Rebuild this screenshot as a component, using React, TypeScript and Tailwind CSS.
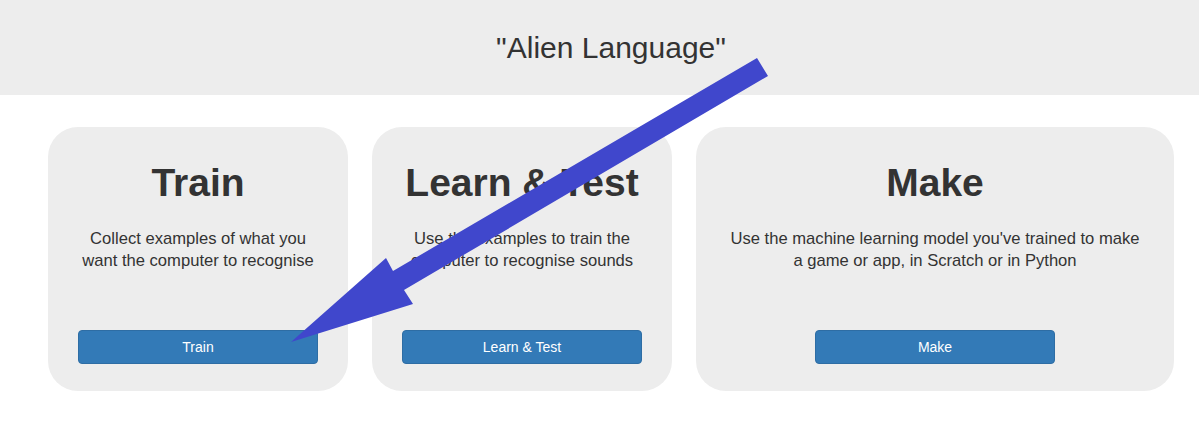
const CARDS = [
  {
    title: "Train",
    text: "Collect examples of what you want the computer to recognise",
    button: "Train",
    width: "w-[300px]",
  },
  {
    title: "Learn & Test",
    text: "Use the examples to train the computer to recognise sounds",
    button: "Learn & Test",
    width: "w-[300px]",
  },
  {
    title: "Make",
    text: "Use the machine learning model you've trained to make a game or app, in Scratch or in Python",
    button: "Make",
    width: "w-[478px]",
  },
];

function Card({ title, text, button, width }: (typeof CARDS)[number]) {
  return (
    <div
      className={`${width} flex h-[264px] flex-col items-center rounded-[30px] bg-[#ededed] px-[30px] pt-[35px] pb-[27px] text-center text-[#333]`}
    >
      <h2 className="text-[39px] font-bold leading-[42px]">{title}</h2>
      <p className="mt-[24px] text-[16.6px] leading-[22px]">{text}</p>
      <button className="mt-auto h-[34px] w-[240px] rounded-[4px] border border-[#2e6da4] bg-[#337ab7] text-[14px] text-white">
        {button}
      </button>
    </div>
  );
}

export default function App() {
  return (
    <div className="relative h-[421px] w-[1199px] overflow-hidden bg-white font-['Liberation_Sans',Arial,sans-serif]">
      <header className="flex h-[95px] items-center justify-center bg-[#ededed] pl-[23px]">
        <h1 className="text-[30px] leading-[34px] text-[#333]">"Alien Language"</h1>
      </header>

      <div className="mt-[32px] flex gap-6 pl-[48px]">
        {CARDS.map((c) => (
          <Card key={c.title} {...c} />
        ))}
      </div>

      {/* pointer arrow drawn over the page */}
      <svg
        className="pointer-events-none absolute inset-0"
        width="1199"
        height="421"
        viewBox="0 0 1199 421"
      >
        <polygon
          points="757,58 768,76 404,290 413,304 291,342 386,258 393,271"
          fill="#4047cc"
        />
      </svg>
    </div>
  );
}
